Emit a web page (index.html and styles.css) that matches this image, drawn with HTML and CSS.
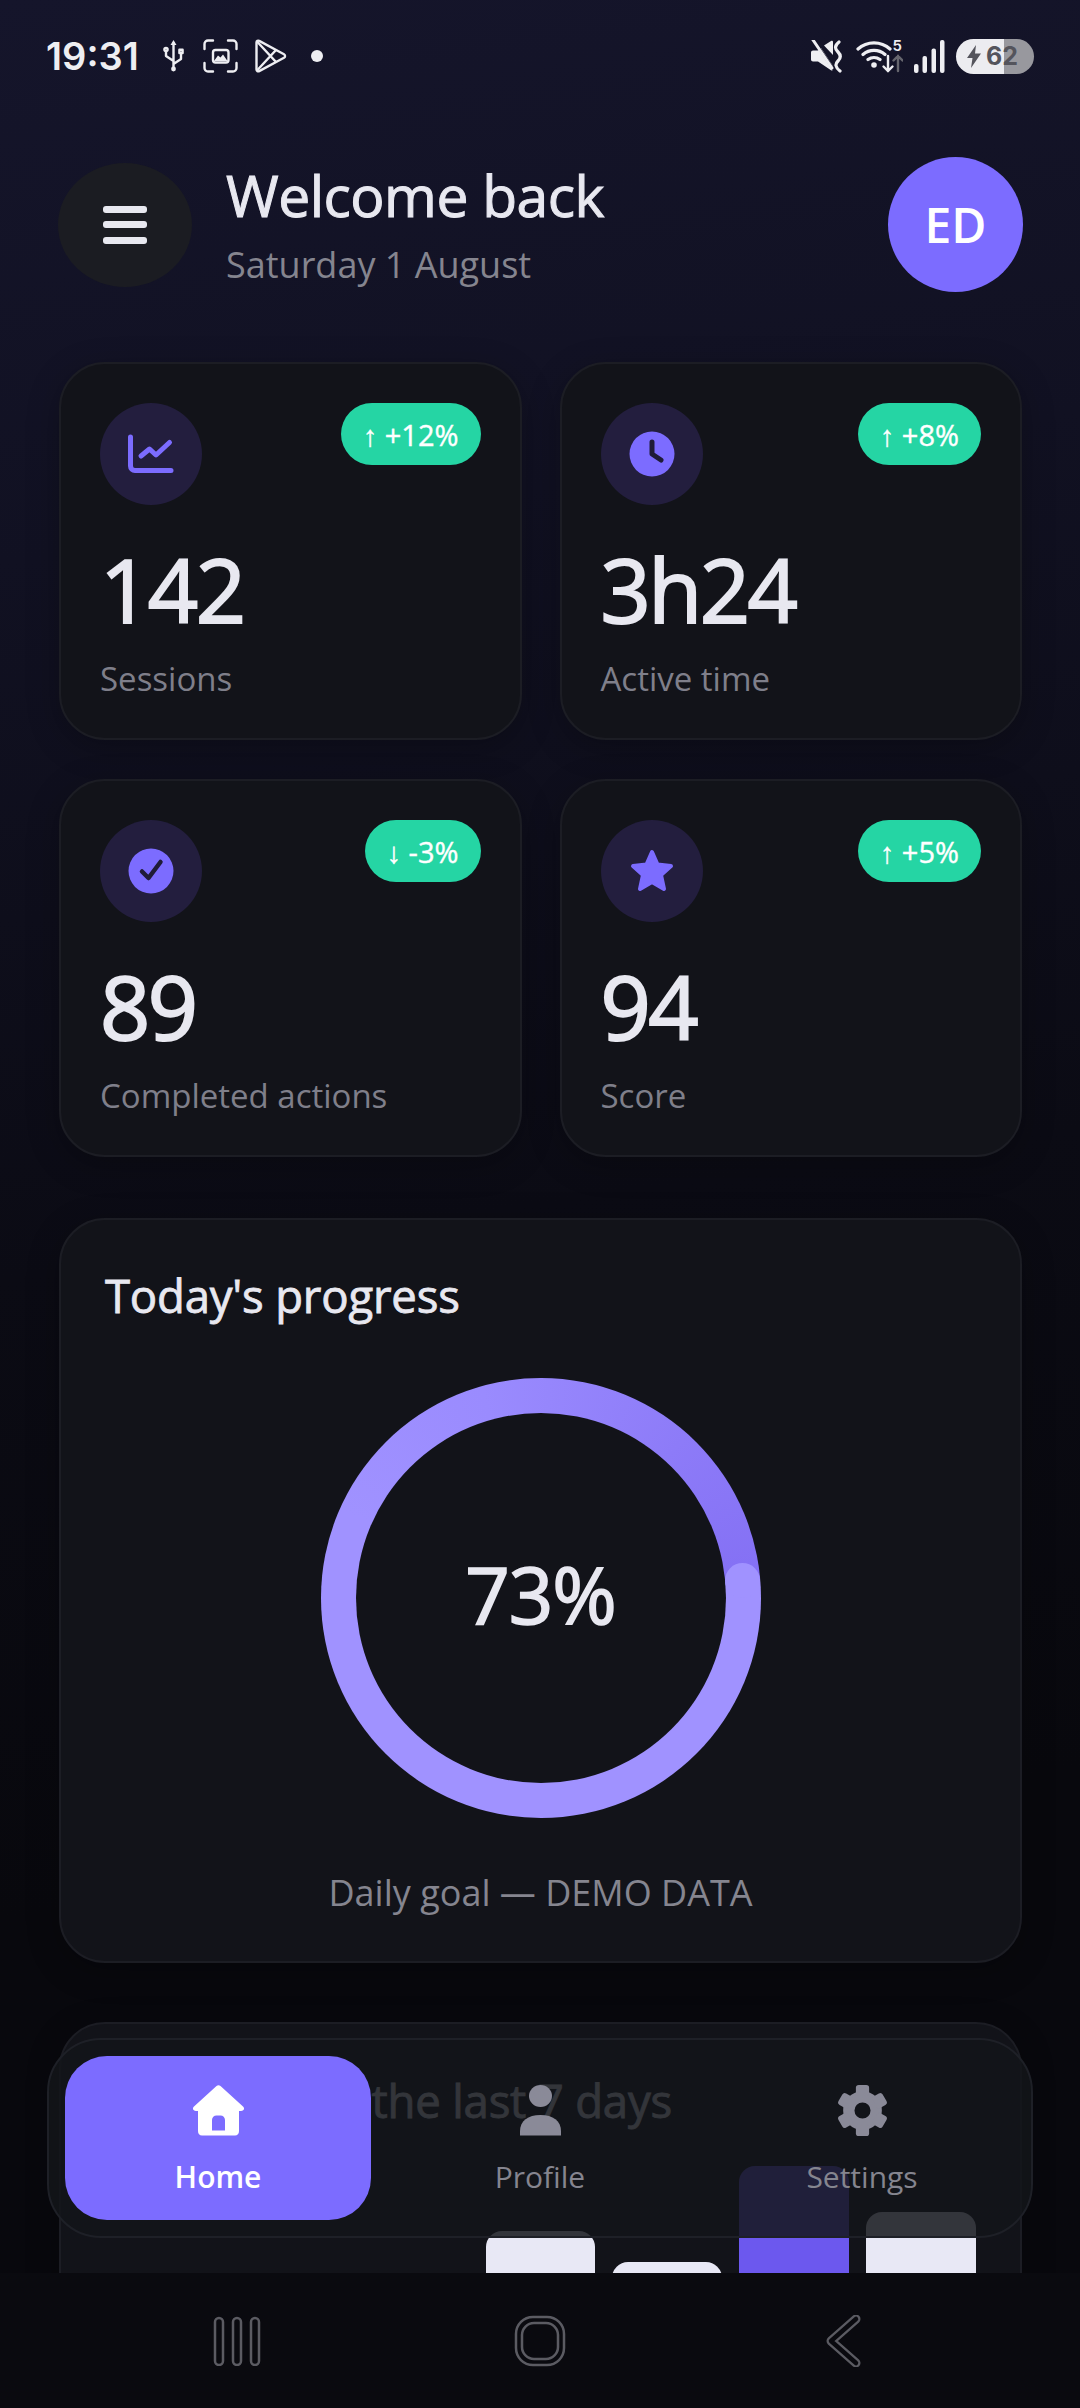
FILE: index.html
```html
<!DOCTYPE html>
<html lang="en">
<head>
  <meta charset="UTF-8">
  <meta name="viewport" content="width=device-width, initial-scale=1.0">
  <title>Dashboard</title>
  <link rel="stylesheet" href="styles.css">
</head>
<body>
  <div class="phone">

    <!-- Status bar -->
    <div class="status-bar">
      <div class="status-left">
        <span class="status-time">19:31</span>
        <svg class="st-usb" width="23" height="32" viewBox="0 0 23 32" fill="none" stroke="#eeeef2" stroke-width="2.4" stroke-linecap="round" stroke-linejoin="round">
          <path d="M11.5 3V27M11.5 21L4 16V11M11.5 24L19 19V13"/>
          <path d="M11.5 0L8.5 5H14.5Z" fill="#eeeef2" stroke="none"/>
          <circle cx="11.5" cy="29" r="2.4" fill="#eeeef2" stroke="none"/>
          <circle cx="4" cy="9.5" r="1.6"/>
          <rect x="17.4" y="9.8" width="3.2" height="3.2"/>
        </svg>
        <svg class="st-shot" width="35" height="34" viewBox="0 0 35 34" fill="none" stroke="#eeeef2" stroke-width="2.4" stroke-linecap="round">
          <path d="M10 1.5H5A3.5 3.5 0 0 0 1.5 5V10M25 1.5H30A3.5 3.5 0 0 1 33.5 5V10M10 32.5H5A3.5 3.5 0 0 1 1.5 29V24M25 32.5H30A3.5 3.5 0 0 0 33.5 29V24"/>
          <rect x="10" y="11" width="15.5" height="12.5" rx="2.5"/>
          <path d="M11 22L15 16.5L17.5 18.5L20 15.5L24.5 22Z" fill="#eeeef2" stroke="none"/>
        </svg>
        <svg class="st-play" width="33" height="34" viewBox="0 0 33 34" fill="none" stroke="#eeeef2" stroke-width="2.4" stroke-linejoin="round">
          <path d="M2.5 3.5C2.5 2 4 1.2 5.2 1.9L30 15.2C31.4 16 31.4 18 30 18.8L5.2 32.1C4 32.8 2.5 32 2.5 30.5Z"/>
          <path d="M3 2.5L22 23M3 31.5L22 11"/>
        </svg>
        <span class="status-dot"></span>
      </div>
      <div class="status-right">
        <svg width="35" height="33" viewBox="0 0 35 33" fill="none">
          <path d="M1 12.5C1 11.4 1.900 10.500 3 10.500H8L11 8L23 26V29.500C23 30.500 22 31 21 30.200L8 21.500H3C1.900 21.500 1 20.600 1 19.500Z" fill="#eeeef2"/>
          <path d="M14 5.500L21 1C22 .4 23 1 23 2V15Z" fill="#eeeef2"/>
          <path d="M5 2L24 30" stroke="#14142a" stroke-width="3"/>
          <path d="M3 0L22 28" stroke="#eeeef2" stroke-width="3" stroke-linecap="round"/>
          <path d="M29 2C24 6 25 9 28 12C31 15 31 18 28 21C25 24 25 27 30 31" stroke="#eeeef2" stroke-width="3.200" stroke-linecap="round"/>
        </svg>
        <svg width="47" height="40" viewBox="0 -3 47 40" fill="none" stroke="#eeeef2" stroke-linecap="round">
          <path d="M2 10A24 24 0 0 1 34 10M7 15.500A17 17 0 0 1 29 15.500M12 20.500A10 10 0 0 1 24 20.500" stroke-width="3.200"/>
          <circle cx="18" cy="26" r="2.800" fill="#eeeef2" stroke="none"/>
          <text class="st-five" x="36.500" y="12">5</text>
          <path d="M32 17V32M27.500 27.500L32 32L36.500 27.500" stroke-width="2.400"/>
          <path d="M42 32V17M37.500 21.500L42 17L46.500 21.500" stroke="#66666e" stroke-width="2.400"/>
        </svg>
        <svg width="31" height="33" viewBox="0 0 31 33" fill="#eeeef2">
          <rect x="0" y="24" width="4.500" height="9" rx="2"/>
          <rect x="8.500" y="16" width="4.500" height="17" rx="2"/>
          <rect x="17.500" y="8.500" width="4.500" height="24.500" rx="2"/>
          <rect x="26" y="0" width="4.500" height="33" rx="2"/>
        </svg>
        <div class="battery">
          <svg width="14" height="23" viewBox="0 0 14 23" fill="#54545c"><path d="M9 0L0 13H5.500L4 23L14 8.500H8Z"/></svg>
          <span>62</span>
        </div>
      </div>
    </div>

    <!-- Scrolling content -->
    <div class="screen">
      <header class="top-row">
        <button class="menu-btn">
          <span></span><span></span><span></span>
        </button>
        <div class="greeting">
          <h1>Welcome back</h1>
          <p>Saturday 1 August</p>
        </div>
        <div class="avatar">ED</div>
      </header>

      <section class="stat-grid">
        <div class="stat-card">
          <div class="stat-top">
            <div class="stat-icon">
              <svg width="60" height="60" viewBox="0 0 60 60" fill="none" stroke="#7c6cff" stroke-width="5" stroke-linecap="round" stroke-linejoin="round">
                <path d="M9.500 13V42A4.500 4.500 0 0 0 14 46.500H50"/>
                <path d="M20 32L28.500 25L35 31L48.500 18.500"/>
              </svg>
            </div>
            <span class="badge">↑ +12%</span>
          </div>
          <div class="stat-value">142</div>
          <div class="stat-label">Sessions</div>
        </div>

        <div class="stat-card">
          <div class="stat-top">
            <div class="stat-icon">
              <svg width="60" height="60" viewBox="0 0 60 60" fill="none">
                <circle cx="30" cy="30" r="22.500" fill="#7c6cff"/>
                <path d="M30 18V30L39 36" stroke="#1f1b38" stroke-width="5" stroke-linecap="round" stroke-linejoin="round"/>
              </svg>
            </div>
            <span class="badge">↑ +8%</span>
          </div>
          <div class="stat-value">3h24</div>
          <div class="stat-label">Active time</div>
        </div>

        <div class="stat-card">
          <div class="stat-top">
            <div class="stat-icon">
              <svg width="60" height="60" viewBox="0 0 60 60" fill="none">
                <circle cx="30" cy="30" r="22.500" fill="#7c6cff"/>
                <path d="M21 30.500L27.500 37L39.500 21" stroke="#1f1b38" stroke-width="4.500" stroke-linecap="round" stroke-linejoin="round"/>
              </svg>
            </div>
            <span class="badge">↓ -3%</span>
          </div>
          <div class="stat-value">89</div>
          <div class="stat-label">Completed actions</div>
        </div>

        <div class="stat-card">
          <div class="stat-top">
            <div class="stat-icon">
              <svg width="60" height="60" viewBox="0 0 60 60" fill="#7c6cff" stroke="#7c6cff" stroke-width="4" stroke-linejoin="round">
                <path d="M30 11L35.500 23.500L49 25L39 34L42 48L30 41L18 48L21 34L11 25L24.500 23.500Z"/>
              </svg>
            </div>
            <span class="badge">↑ +5%</span>
          </div>
          <div class="stat-value">94</div>
          <div class="stat-label">Score</div>
        </div>
      </section>

      <section class="panel progress-panel">
        <h2>Today's progress</h2>
        <div class="ring">
          <div class="ring-hole">73%</div>
          <span class="ring-cap"></span>
        </div>
        <p class="ring-note">Daily goal — DEMO DATA</p>
      </section>

      <section class="panel chart-panel">
        <h2>Activity over the last 7 days</h2>
        <div class="bars">
          <div class="bar" style="height: 180px"></div>
          <div class="bar" style="height: 220px"></div>
          <div class="bar" style="height: 200px"></div>
          <div class="bar" style="height: 309px"></div>
          <div class="bar" style="height: 278px"></div>
          <div class="bar bar-today" style="height: 374px"></div>
          <div class="bar" style="height: 328px"></div>
        </div>
      </section>
    </div>

    <!-- Floating tab bar -->
    <nav class="tab-bar">
      <a class="tab tab-active">
        <svg width="51" height="51" viewBox="0 0 51 51" fill="#fff">
          <path fill-rule="evenodd" d="M23.500 1L1 21.500C-1 23.500 0 26 3 26H5V46C5 48.800 6.500 50.500 9 50.500H42C44.500 50.500 46 48.800 46 46V26H48C51 26 52 23.500 50 21.500L27.500 1C26.300 0 24.700 0 23.500 1ZM19 45.500V35C19 32.500 21 30.500 23.500 30.500H27.500C30 30.500 32 32.500 32 35V45.500Z"/>
        </svg>
        <span>Home</span>
      </a>
      <a class="tab">
        <svg width="51" height="51" viewBox="0 0 51 51" fill="#8a8a98">
          <ellipse cx="25.500" cy="11" rx="11.500" ry="11"/>
          <path d="M5 50.500V46C5 36 13 30 25.500 30C38 30 46 36 46 46V50.500Z"/>
        </svg>
        <span>Profile</span>
      </a>
      <a class="tab">
        <svg width="53" height="51" viewBox="-27 -27 54 54" fill="#8a8a98">
          <circle r="14.500" fill="none" stroke="#8a8a98" stroke-width="12"/>
          <rect x="-7" y="-27" width="14" height="12" rx="3"/>
          <rect x="-7" y="-27" width="14" height="12" rx="3" transform="rotate(60)"/>
          <rect x="-7" y="-27" width="14" height="12" rx="3" transform="rotate(120)"/>
          <rect x="-7" y="-27" width="14" height="12" rx="3" transform="rotate(180)"/>
          <rect x="-7" y="-27" width="14" height="12" rx="3" transform="rotate(240)"/>
          <rect x="-7" y="-27" width="14" height="12" rx="3" transform="rotate(300)"/>
        </svg>
        <span>Settings</span>
      </a>
    </nav>

    <!-- System navigation -->
    <div class="system-nav">
      <svg width="48" height="50" viewBox="0 0 48 50" fill="none" stroke="#5b5b62" stroke-width="2.500">
        <rect x="2" y="2" width="8" height="47" rx="4"/>
        <rect x="20" y="2" width="8" height="47" rx="4"/>
        <rect x="38" y="2" width="8" height="47" rx="4"/>
      </svg>
      <svg width="52" height="52" viewBox="0 0 52 52" fill="none" stroke="#5b5b62" stroke-width="2.500">
        <rect x="2" y="2" width="48" height="48" rx="17"/>
        <rect x="8" y="8" width="36" height="36" rx="12"/>
      </svg>
      <svg width="36" height="52" viewBox="0 0 36 52" fill="none" stroke-linecap="round" stroke-linejoin="round">
        <path d="M31 4L6 26L31 48" stroke="#5b5b62" stroke-width="9"/>
        <path d="M31 4L6 26L31 48" stroke="#0a0a0f" stroke-width="4.500"/>
      </svg>
    </div>
  </div>
</body>
</html>
```

FILE: styles.css
```css
/* Dashboard page styles */
* {
  box-sizing: border-box;
}

body {
  margin: 0;
  padding: 0;
  background-color: #0a0a0f;
  font-family: "Open Sans", Arial, sans-serif;
  color: #e8e8f0;
}

h1, h2, p {
  margin: 0;
}

.phone {
  position: relative;
  width: 1080px;
  height: 2408px;
  display: flex;
  flex-direction: column;
  overflow: hidden;
  background: linear-gradient(172deg, #15152b 0%, #111122 22%, #0b0b14 50%, #08080d 75%);
}

/* Status bar */
.status-bar {
  height: 110px;
  flex-shrink: 0;
  padding: 38px 46px 0 46px;
  display: flex;
  justify-content: space-between;
  align-items: flex-start;
}

.status-left, .status-right {
  display: flex;
  align-items: center;
  height: 36px;
}

.status-time {
  font-family: Inter, Roboto, sans-serif;
  font-size: 38px;
  font-weight: 600;
  color: #eeeef2;
  margin-right: 23px;
}

.st-usb {
  margin-right: 18px;
}

.st-shot {
  margin-right: 16px;
}

.status-dot {
  width: 12px;
  height: 12px;
  margin-left: 24px;
  border-radius: 50%;
  background-color: #eeeef2;
}

.status-right {
  gap: 11px;
}

.st-five {
  font-family: Inter, Roboto, sans-serif;
  font-size: 15px;
  font-weight: 600;
  fill: #eeeef2;
  stroke: none;
}

.battery {
  width: 78px;
  height: 35px;
  padding-left: 11px;
  display: flex;
  align-items: center;
  gap: 5px;
  border-radius: 18px;
  background: linear-gradient(90deg, #ececf0 61.5%, #98989e 61.5%);
  font-family: Inter, Roboto, sans-serif;
  font-size: 25px;
  font-weight: 700;
  color: #54545c;
}

/* Content */
.screen {
  flex: 1;
  min-height: 0;
  overflow: hidden;
  padding: 47px 58px 0 59px;
}

.top-row {
  display: flex;
  align-items: center;
  margin: 0 -1px 70px -1px;
}

.menu-btn {
  width: 134px;
  height: 124px;
  padding: 0;
  border: none;
  border-radius: 50%;
  background-color: #1b1c22;
  display: flex;
  flex-direction: column;
  align-items: center;
  justify-content: center;
  gap: 8.5px;
}

.menu-btn span {
  width: 44px;
  height: 7px;
  border-radius: 3px;
  background-color: #e8e8f0;
}

.greeting {
  flex: 1;
  margin-left: 34px;
}

.greeting h1 {
  font-size: 57px;
  font-weight: 400;
  -webkit-text-stroke: 1px #e8e8f0;
  line-height: 70px;
  letter-spacing: -0.5px;
  margin-bottom: 10px;
}

.greeting p {
  font-size: 36px;
  line-height: 50px;
  color: #85858f;
}

.avatar {
  width: 135px;
  height: 135px;
  border-radius: 50%;
  background-color: #7c6cff;
  color: #fff;
  display: flex;
  align-items: center;
  justify-content: center;
  font-size: 48px;
  font-weight: 600;
}

.stat-grid {
  display: grid;
  grid-template-columns: 1fr 1fr;
  gap: 39px 38px;
  margin-bottom: 61px;
}

.stat-card {
  height: 378px;
  padding: 39px;
  background-color: #121319;
  border: 2px solid #1c1d24;
  border-radius: 46px;
  box-shadow: 0 8px 32px rgba(0, 0, 0, 0.25);
}

.stat-top {
  display: flex;
  justify-content: space-between;
  align-items: flex-start;
}

.stat-icon {
  width: 102px;
  height: 102px;
  border-radius: 50%;
  background-color: #231e3e;
  display: flex;
  align-items: center;
  justify-content: center;
}

.badge {
  height: 62px;
  padding: 0 22px;
  display: flex;
  align-items: center;
  border-radius: 31px;
  background-color: #25d5a4;
  color: #fff;
  font-size: 29px;
  -webkit-text-stroke: 0.4px #fff;
  white-space: pre;
}

.stat-value {
  margin-top: 26px;
  font-size: 88px;
  -webkit-text-stroke: 2px #e8e8f0;
  line-height: 116px;
  letter-spacing: -2.5px;
}

.stat-label {
  margin-top: 9px;
  font-size: 33px;
  line-height: 46px;
  color: #7f7f8a;
}

.panel {
  background-color: #121319;
  border: 2px solid #1c1d24;
  border-radius: 46px;
  box-shadow: 0 8px 32px rgba(0, 0, 0, 0.25);
}

.panel h2 {
  font-size: 45.5px;
  font-weight: 400;
  -webkit-text-stroke: 0.8px #e8e8f0;
  line-height: 60px;
  letter-spacing: -0.2px;
}

.progress-panel {
  height: 745px;
  padding: 45px 44px 0;
  margin-bottom: 59px;
}

.ring {
  position: relative;
  width: 440px;
  height: 440px;
  margin: 53px auto 0;
  border-radius: 50%;
  background: conic-gradient(from 85deg, #a092ff 0%, #a092ff 58%, #9a8bfe 72%, #8d7bf8 88%, #8470f4 100%);
  display: flex;
  align-items: center;
  justify-content: center;
}

.ring-hole {
  width: 370px;
  height: 370px;
  padding-bottom: 8px;
  border-radius: 50%;
  background-color: #121319;
  display: flex;
  align-items: center;
  justify-content: center;
  font-size: 78px;
  -webkit-text-stroke: 1.6px #e8e8f0;
  letter-spacing: -1px;
}

.ring-cap {
  position: absolute;
  top: 185px;
  right: 1px;
  width: 35px;
  height: 35px;
  border-radius: 50%;
  background-color: #a092ff;
}

.ring-note {
  margin-top: 50px;
  text-align: center;
  font-size: 36px;
  line-height: 50px;
  color: #85858f;
}

.chart-panel {
  height: 700px;
  padding: 46px 44px 0;
}

.bars {
  padding-top: 20px;
  height: 410px;
  display: flex;
  align-items: flex-end;
  gap: 17px;
}

.bar {
  flex: 1;
  border-radius: 16px 16px 0 0;
  background-color: #e8e8f5;
}

.bar-today {
  background-color: #6c58ee;
}

/* Floating tab bar */
.tab-bar {
  position: absolute;
  left: 47px;
  top: 2038px;
  width: 986px;
  height: 200px;
  padding: 16px;
  display: flex;
  gap: 16px;
  border: 2px solid #1e2027;
  border-radius: 54px;
  background-color: rgba(19, 21, 26, 0.85);
}

.tab {
  flex: 1;
  padding-top: 29px;
  display: flex;
  flex-direction: column;
  align-items: center;
  gap: 20px;
  border-radius: 42px;
  font-size: 30px;
  line-height: 41px;
  color: #85858f;
}

.tab-active {
  background-color: #7c6cff;
  color: #fff;
  font-weight: 600;
}

/* System navigation */
.system-nav {
  height: 135px;
  flex-shrink: 0;
  background-color: #0a0a0f;
  display: grid;
  grid-template-columns: repeat(3, 303px);
  justify-content: center;
  justify-items: center;
  align-items: center;
}
```
